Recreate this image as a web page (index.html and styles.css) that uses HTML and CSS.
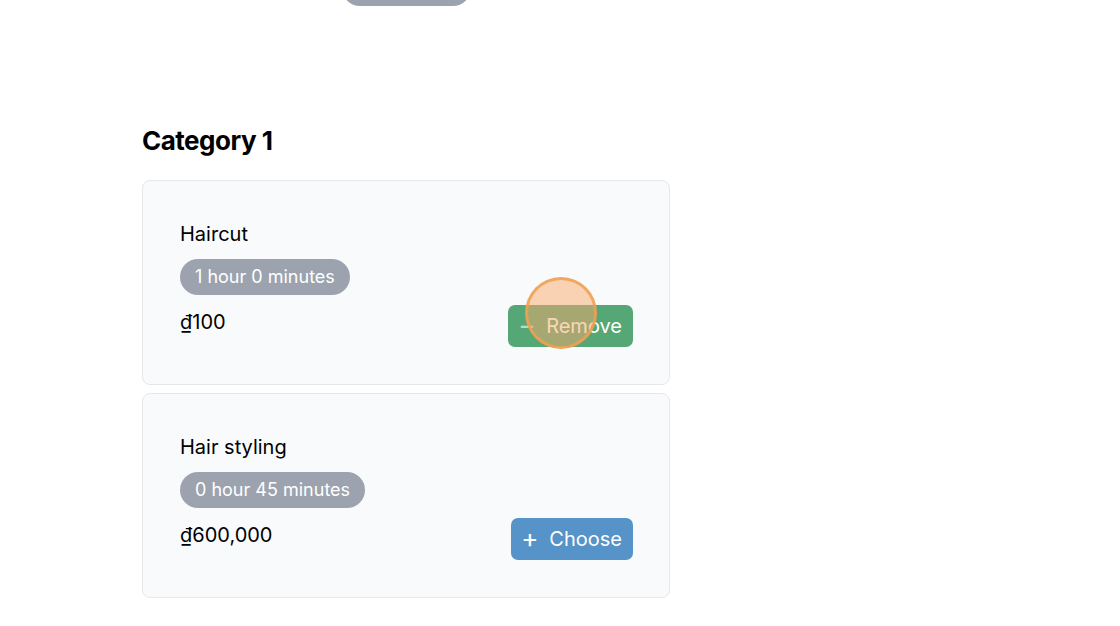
FILE: index.html
```html
<!DOCTYPE html>
<html lang="en">
<head>
    <meta charset="UTF-8">
    <meta name="viewport" content="width=device-width, initial-scale=1.0">
    <title>Services</title>
    <link rel="stylesheet" href="styles.css">
</head>
<body>
    <div class="page">
        <div class="prev-pill"></div>

        <section class="category">
            <h2 class="category-title">Category 1</h2>

            <div class="service">
                <div class="service-name">Haircut</div>
                <div class="duration">1 hour 0 minutes</div>
                <div class="service-row">
                    <div class="price">₫100</div>
                    <button type="button" class="btn btn-remove">
                        <span class="btn-icon">−</span>
                        <span>Remove</span>
                    </button>
                </div>
                <div class="tap"></div>
            </div>

            <div class="service">
                <div class="service-name">Hair styling</div>
                <div class="duration">0 hour 45 minutes</div>
                <div class="service-row">
                    <div class="price">₫600,000</div>
                    <button type="button" class="btn btn-choose">
                        <span class="btn-icon">+</span>
                        <span>Choose</span>
                    </button>
                </div>
            </div>
        </section>
    </div>
</body>
</html>
```

FILE: styles.css
```css
body { margin: 0; font-family: Inter, "Noto Sans", sans-serif; color: #000; background: #fff; }
.page { width: 528px; padding-left: 142px; }
.prev-pill { width: 129px; height: 36px; margin: -30px auto 0; background: #9ca3af; border-radius: 18px; }
.category-title { font-size: 26px; font-weight: 700; line-height: 32px; margin: 119px 0 23px; letter-spacing: -0.5px; }
.service { position: relative; background: #f9fafb; border: 1px solid #e5e7eb; border-radius: 8px; padding: 39px 36px 37px 37px; margin-bottom: 8px; }
.service-name { font-size: 20px; line-height: 28px; }
.duration { display: inline-block; margin-top: 11px; padding: 0 15px; height: 36px; line-height: 36px; border-radius: 18px; background: #9ca3af; color: #fff; font-size: 18px; }
.service-row { display: flex; justify-content: space-between; align-items: flex-start; margin-top: 10px; }
.price { font-size: 20px; line-height: 28px; padding-top: 3px; }
.btn { display: flex; align-items: center; gap: 14px; height: 42px; padding: 0 11px 0 10px; border: none; border-radius: 7px; color: #fff; font-family: inherit; font-size: 20px; cursor: pointer; }
.btn-icon { font-size: 26px; line-height: 1; width: 14px; text-align: center; margin-top: -3px; }
.btn-remove { background: #55a775; }
.btn-remove .btn-icon { opacity: 0.6; }
.btn-choose { background: #5593c8; }
.tap { position: absolute; left: 382px; top: 96px; width: 66px; height: 66px; border-radius: 50%; background: rgba(250, 170, 110, 0.5); border: 3px solid rgba(240, 160, 80, 0.85); }
```
